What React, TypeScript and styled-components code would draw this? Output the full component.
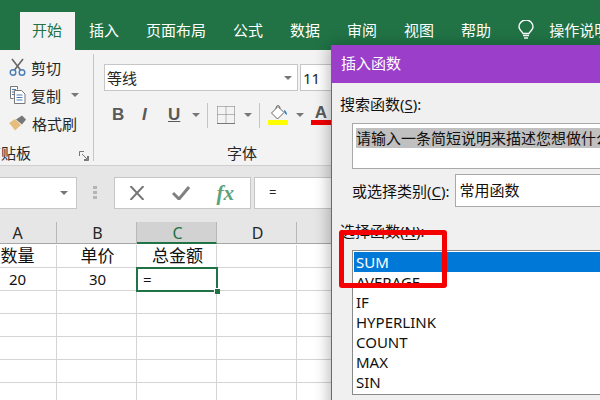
import React from 'react';
import styled, { createGlobalStyle } from 'styled-components';

const GlobalStyle = createGlobalStyle`
  html, body {
    margin: 0;
    padding: 0;
    width: 600px;
    height: 400px;
    overflow: hidden;
    background: #fff;
  }
  * {
    box-sizing: border-box;
  }
`;

const font = `"Noto Sans", "Noto Sans CJK SC", sans-serif`;

const Window = styled.div`
  position: relative;
  width: 600px;
  height: 400px;
  overflow: hidden;
  font-family: ${font};
  color: #262626;
`;

const TabBar = styled.nav`
  display: flex;
  align-items: flex-end;
  gap: 2px;
  height: 50px;
  padding-left: 20px;
  background: #217346;
`;

const Tab = styled.div<{ $active?: boolean }>`
  display: flex;
  align-items: center;
  gap: 15px;
  height: 38px;
  padding: 0 13px 2px 12px;
  font-size: 15px;
  line-height: 20px;
  white-space: nowrap;
  color: ${({ $active }) => ($active ? '#217346' : '#fff')};
  background: ${({ $active }) => ($active ? '#f3f3f3' : 'transparent')};
`;

const Ribbon = styled.section`
  display: flex;
  height: 116px;
  background: #f3f3f3;
  border-bottom: 1px solid #cfcfcf;
  overflow: hidden;
`;

const ClipboardGroup = styled.div`
  position: relative;
  display: flex;
  flex-direction: column;
  flex: none;
  width: 94px;
  height: 107px;
  margin-top: 4px;
  padding: 0 0 0 9px;
  border-right: 1px solid #c6c6c6;
`;

const ClipList = styled.div`
  display: flex;
  flex-direction: column;
  height: 86px;
  margin-top: -1px;
`;

const ClipRow = styled.div`
  display: flex;
  align-items: center;
  gap: 5px;
  flex: none;
  height: 28px;
  font-size: 15px;
  white-space: nowrap;
`;

const GroupLabel = styled.div<{ $clipped?: boolean }>`
  margin-top: ${({ $clipped }) => ($clipped ? '6px' : 'auto')};
  margin-bottom: ${({ $clipped }) => ($clipped ? '0' : '-2px')};
  margin-left: ${({ $clipped }) => ($clipped ? '-23px' : '0')};
  height: 20px;
  font-size: 15px;
  line-height: 20px;
  white-space: nowrap;
  text-align: ${({ $clipped }) => ($clipped ? 'left' : 'center')};
`;

const Launcher = styled.svg`
  position: absolute;
  left: 79px;
  top: 97px;
`;

const FontGroup = styled.div`
  display: flex;
  flex-direction: column;
  flex: none;
  width: 296px;
  height: 107px;
  margin-top: 4px;
  padding: 10px 10px 0 10px;
`;

const FontRow = styled.div`
  display: flex;
  gap: 2px;
`;

const FontBox = styled.div<{ $width: number }>`
  display: flex;
  align-items: center;
  justify-content: space-between;
  width: ${({ $width }) => $width}px;
  height: 27px;
  padding: 0 5px 0 2px;
  font-size: 15px;
  background: #fff;
  border: 1px solid #c6c6c6;
`;

const Caret = styled.i<{ $color?: string; $left?: number }>`
  display: block;
  flex: none;
  width: 0;
  height: 0;
  margin-left: ${({ $left }) => $left || 0}px;
  border-left: 4px solid transparent;
  border-right: 4px solid transparent;
  border-top: 4px solid ${({ $color }) => $color || '#777'};
`;

const Tools = styled.div`
  display: flex;
  align-items: center;
  height: 26px;
  margin-top: 11px;
  padding-left: 8px;
`;

const ToolLetter = styled.span<{ $width: number; $italic?: boolean; $underline?: boolean }>`
  flex: none;
  width: ${({ $width }) => $width}px;
  font-family: "Liberation Sans", sans-serif;
  font-size: 17px;
  font-weight: 700;
  color: #595959;
  font-style: ${({ $italic }) => ($italic ? 'italic' : 'normal')};
  text-decoration: ${({ $underline }) => ($underline ? 'underline' : 'none')};
`;

const ToolSep = styled.i<{ $left: number; $right: number }>`
  display: block;
  flex: none;
  width: 1px;
  height: 25px;
  margin: 0 ${({ $right }) => $right}px 0 ${({ $left }) => $left}px;
  background: #c6c6c6;
`;

const BorderSlot = styled.div`
  display: flex;
  flex: none;
  margin-right: 9px;
`;

const ColorTool = styled.div<{ $left?: number }>`
  display: flex;
  flex-direction: column;
  align-items: center;
  flex: none;
  width: 20px;
  margin-left: ${({ $left }) => $left || 0}px;
`;

const ColorBar = styled.i<{ $color: string }>`
  display: block;
  width: 20px;
  height: 5px;
  background: ${({ $color }) => $color};
`;

const ColorA = styled.span`
  height: 15px;
  font-family: "Liberation Sans", sans-serif;
  font-size: 17px;
  line-height: 15px;
  font-weight: 700;
  color: #595959;
`;

const FormulaBar = styled.section`
  display: flex;
  align-items: center;
  height: 56px;
  padding-bottom: 3px;
  background: #e6e6e6;
`;

const NameBox = styled.div`
  display: flex;
  align-items: center;
  justify-content: flex-end;
  flex: none;
  width: 77px;
  height: 32px;
  padding-right: 8px;
  background: #fff;
  border: 1px solid #c6c6c6;
  border-left: none;
`;

const Grip = styled.div`
  display: flex;
  flex-direction: column;
  gap: 2px;
  flex: none;
  width: 4px;
  margin: 0 17px 0 16px;
  & > i {
    display: block;
    height: 3px;
    background: #b5b5b5;
  }
`;

const FormulaButtons = styled.div`
  display: flex;
  align-items: center;
  justify-content: space-between;
  flex: none;
  width: 137px;
  height: 32px;
  padding: 0 16px 0 14px;
  background: #fff;
  border: 1px solid #c6c6c6;
`;

const Fx = styled.span`
  font-family: "Liberation Serif", serif;
  font-size: 21px;
  line-height: 20px;
  font-weight: 700;
  font-style: italic;
  color: #5aa37c;
`;

const FormulaInput = styled.div`
  flex: 1;
  height: 32px;
  margin-left: 3px;
  padding-left: 14px;
  font-size: 13px;
  line-height: 29px;
  background: #fff;
  border: 1px solid #c6c6c6;
`;

const Sheet = styled.div`
  display: grid;
  grid-template-columns: repeat(5, 80px);
  grid-auto-rows: 23px;
  margin-left: -23px;
`;

const ColHead = styled.div<{ $active?: boolean }>`
  height: 22px;
  padding-left: 2px;
  font-size: 16px;
  line-height: 22px;
  text-align: center;
  color: ${({ $active }) => ($active ? '#217346' : '#262626')};
  background: ${({ $active }) => ($active ? '#d2d2d2' : '#e6e6e6')};
  border-right: 1px solid #b8b8b8;
  border-bottom: ${({ $active }) => ($active ? '2px solid #217346' : '1px solid #a6a6a6')};
`;

const Cell = styled.div<{ $cjk?: boolean }>`
  position: relative;
  padding-left: 2px;
  font-size: ${({ $cjk }) => ($cjk ? '17px' : '15px')};
  line-height: 22px;
  text-align: center;
  color: #111;
  white-space: nowrap;
  border-right: 1px solid #d4d4d4;
  border-bottom: 1px solid #d4d4d4;
`;

const ActiveCell = styled(Cell)`
  margin: -1px -1px 0 -1px;
  padding-left: 5px;
  text-align: left;
  line-height: 20px;
  border: 2px solid #217346;
  height: 25px;
  z-index: 1;
`;

const FillHandle = styled.i`
  position: absolute;
  right: -4px;
  bottom: -4px;
  width: 6px;
  height: 6px;
  background: #217346;
  border: 1px solid #fff;
  border-width: 1px 0 0 1px;
`;

const Dialog = styled.div`
  position: absolute;
  left: 331px;
  top: 45px;
  width: 280px;
  height: 370px;
  background: #f0f0f0;
  border-left: 1px solid #9b3fcb;
  box-shadow: -2px 0 14px rgba(0, 0, 0, 0.28);
`;

const DialogTitle = styled.header`
  height: 38px;
  padding-left: 9px;
  font-size: 15px;
  line-height: 37px;
  color: #fff;
  background: #9b3fcb;
`;

const DialogBody = styled.div`
  display: flex;
  flex-direction: column;
  padding: 11px 0 0 8px;
  font-size: 15px;
  color: #111;
`;

const Label = styled.div`
  height: 20px;
  line-height: 20px;
  white-space: nowrap;
  & u {
    text-underline-offset: 2px;
  }
`;

const SearchBox = styled.div`
  height: 46px;
  margin: 9px 0 0 12px;
  padding: 6px 0 0 3px;
  line-height: 16px;
  white-space: nowrap;
  background: #fff;
  border: 1px solid #a9a9a9;
`;

const SelectedText = styled.span`
  background: #c0c0c0;
`;

const CategoryRow = styled.div`
  display: flex;
  align-items: center;
  gap: 5px;
  margin: 5px 0 14px 12px;
`;

const CategorySelect = styled.div`
  flex: 1;
  height: 33px;
  padding-left: 4px;
  line-height: 30px;
  background: #fff;
  border: 1px solid #a9a9a9;
`;

const FunctionList = styled.ul`
  height: 145px;
  margin: 9px 0 0 12px;
  padding: 1px;
  list-style: none;
  background: #fff;
  border: 1px solid #8a8a8a;
`;

const FunctionItem = styled.li<{ $selected?: boolean }>`
  height: 20px;
  padding-left: 2px;
  line-height: 20px;
  color: ${({ $selected }) => ($selected ? '#fff' : '#111')};
  background: ${({ $selected }) => ($selected ? '#0078d7' : 'transparent')};
`;

const Highlight = styled.div`
  position: absolute;
  left: 339px;
  top: 230px;
  width: 108px;
  height: 58px;
  border: 5px solid #f50000;
  border-radius: 3px;
`;

const ScissorsIcon = () => (
  <svg width="17" height="19" viewBox="0 0 17 19" fill="none">
    <path d="M3 1l8.5 11M14 1L5.500 12" stroke="#666" strokeWidth="1.600" />
    <circle cx="4" cy="14.500" r="2.800" stroke="#4a7eb8" strokeWidth="1.400" />
    <circle cx="13" cy="14.500" r="2.800" stroke="#4a7eb8" strokeWidth="1.400" />
  </svg>
);

const CopyIcon = () => (
  <svg width="17" height="18" viewBox="0 0 17 18" fill="none">
    <path d="M1.500.5h7v3M1.500.5v12h3" stroke="#777" fill="#fff" />
    <path d="M5.500 4.500h7l3.500 3.500v9.500H5.500z" stroke="#777" fill="#fff" />
    <path d="M3 3.500h4M3 6h2M3 8.500h2M7.500 9h6M7.500 11.500h6M7.500 14h6" stroke="#4a7eb8" />
  </svg>
);

const BrushIcon = () => (
  <svg width="18" height="16" viewBox="0 0 18 16">
    <path d="M0 8l6-4 6 6-6 5.500C4 13 2 10 0 8z" fill="#e7bd7d" />
    <path d="M7 4.500l6-4 4 4-4 5z" fill="#777" />
  </svg>
);

const BordersIcon = () => (
  <svg width="18" height="18" viewBox="0 0 18 18" fill="none">
    <path d="M.5.500h17M.5 8.500h17M.5.500v17M9 .500v17M17.500.500v17" stroke="#777" strokeDasharray="1 1" />
    <path d="M0 17.500h18" stroke="#777" />
  </svg>
);

const FillIcon = () => (
  <svg width="20" height="15" viewBox="0 0 20 15" fill="none">
    <path d="M10 1.500l6 6-6.500 6.500-6-6z" fill="#fff" stroke="#666" />
    <path d="M8 3.500c0-2 1-3 2-3s2 1 2 3" stroke="#666" />
    <path d="M16 5c2 1 3 2.500 3 5-1.800-.5-3-2.500-3-5z" fill="#3a7cc0" />
  </svg>
);

const Bulb = () => (
  <svg width="16" height="20" viewBox="0 0 16 20" fill="none">
    <path d="M5 13.500C4 11 1 10 1 7a7 7 0 0 1 14 0c0 3-3 4-4 6.500z" stroke="#fff" strokeWidth="1.400" />
    <path d="M5 15.500h6M6 18h4" stroke="#fff" strokeWidth="1.600" />
  </svg>
);

const tabs = ['开始', '插入', '页面布局', '公式', '数据', '审阅', '视图', '帮助'];
const columns = ['A', 'B', 'C', 'D', 'E'];
const functions = ['SUM', 'AVERAGE', 'IF', 'HYPERLINK', 'COUNT', 'MAX', 'SIN'];
const blankRows = [0, 1, 2, 3, 4, 5];

export default function App() {
  return (
    <Window>
      <GlobalStyle />
      <TabBar>
        {tabs.map((tab, i) => (
          <Tab key={tab} $active={i === 0}>
            {tab}
          </Tab>
        ))}
        <Tab>
          <Bulb />
          操作说明搜索
        </Tab>
      </TabBar>

      <Ribbon>
        <ClipboardGroup>
          <ClipList>
            <ClipRow>
              <ScissorsIcon />
              剪切
            </ClipRow>
            <ClipRow>
              <CopyIcon />
              复制
              <Caret $left={5} />
            </ClipRow>
            <ClipRow>
              <BrushIcon />
              格式刷
            </ClipRow>
          </ClipList>
          <GroupLabel $clipped>剪贴板</GroupLabel>
          <Launcher width="10" height="10" viewBox="0 0 10 10" fill="none">
            <path d="M9.500 5v4.500H5M.5 5V.5H5M3 3l5 5M5 8.500h3.500V5" stroke="#777" />
          </Launcher>
        </ClipboardGroup>

        <FontGroup>
          <FontRow>
            <FontBox $width={194}>
              等线
              <Caret />
            </FontBox>
            <FontBox $width={40}>11</FontBox>
          </FontRow>
          <Tools>
            <ToolLetter $width={30}>B</ToolLetter>
            <ToolLetter $width={26} $italic>
              I
            </ToolLetter>
            <ToolLetter $width={24} $underline>
              U
            </ToolLetter>
            <Caret />
            <ToolSep $left={7} $right={9} />
            <BorderSlot>
              <BordersIcon />
            </BorderSlot>
            <Caret />
            <ToolSep $left={7} $right={8} />
            <ColorTool>
              <FillIcon />
              <ColorBar $color="#ffff00" />
            </ColorTool>
            <Caret $left={8} />
            <ColorTool $left={7}>
              <ColorA>A</ColorA>
              <ColorBar $color="#f00000" />
            </ColorTool>
          </Tools>
          <GroupLabel>字体</GroupLabel>
        </FontGroup>
      </Ribbon>

      <FormulaBar>
        <NameBox>
          <Caret />
        </NameBox>
        <Grip>
          <i />
          <i />
          <i />
        </Grip>
        <FormulaButtons>
          <svg width="16" height="14" viewBox="0 0 16 14" fill="none">
            <path d="M1.500 0l13 14M14.500 0l-13 14" stroke="#777" strokeWidth="2" />
          </svg>
          <svg width="18" height="14" viewBox="0 0 18 14" fill="none">
            <path d="M1 7l6 6L17 1" stroke="#808080" strokeWidth="3" />
          </svg>
          <Fx>fx</Fx>
        </FormulaButtons>
        <FormulaInput>=</FormulaInput>
      </FormulaBar>

      <Sheet>
        {columns.map(col => (
          <ColHead key={col} $active={col === 'C'}>
            {col}
          </ColHead>
        ))}
        <Cell $cjk>数量</Cell>
        <Cell $cjk>单价</Cell>
        <Cell $cjk>总金额</Cell>
        <Cell />
        <Cell />
        <Cell>20</Cell>
        <Cell>30</Cell>
        <ActiveCell>
          =
          <FillHandle />
        </ActiveCell>
        <Cell />
        <Cell />
        {blankRows.flatMap(row => columns.map(col => <Cell key={`${row}${col}`} />))}
      </Sheet>

      <Dialog>
        <DialogTitle>插入函数</DialogTitle>
        <DialogBody>
          <Label>
            搜索函数(<u>S</u>):
          </Label>
          <SearchBox>
            <SelectedText>请输入一条简短说明来描述您想做什么，然后单击“转到”</SelectedText>
          </SearchBox>
          <CategoryRow>
            <Label>
              或选择类别(<u>C</u>):
            </Label>
            <CategorySelect>常用函数</CategorySelect>
          </CategoryRow>
          <Label>
            选择函数(<u>N</u>):
          </Label>
          <FunctionList>
            {functions.map((fn, i) => (
              <FunctionItem key={fn} $selected={i === 0}>
                {fn}
              </FunctionItem>
            ))}
          </FunctionList>
        </DialogBody>
      </Dialog>
      <Highlight />
    </Window>
  );
}
